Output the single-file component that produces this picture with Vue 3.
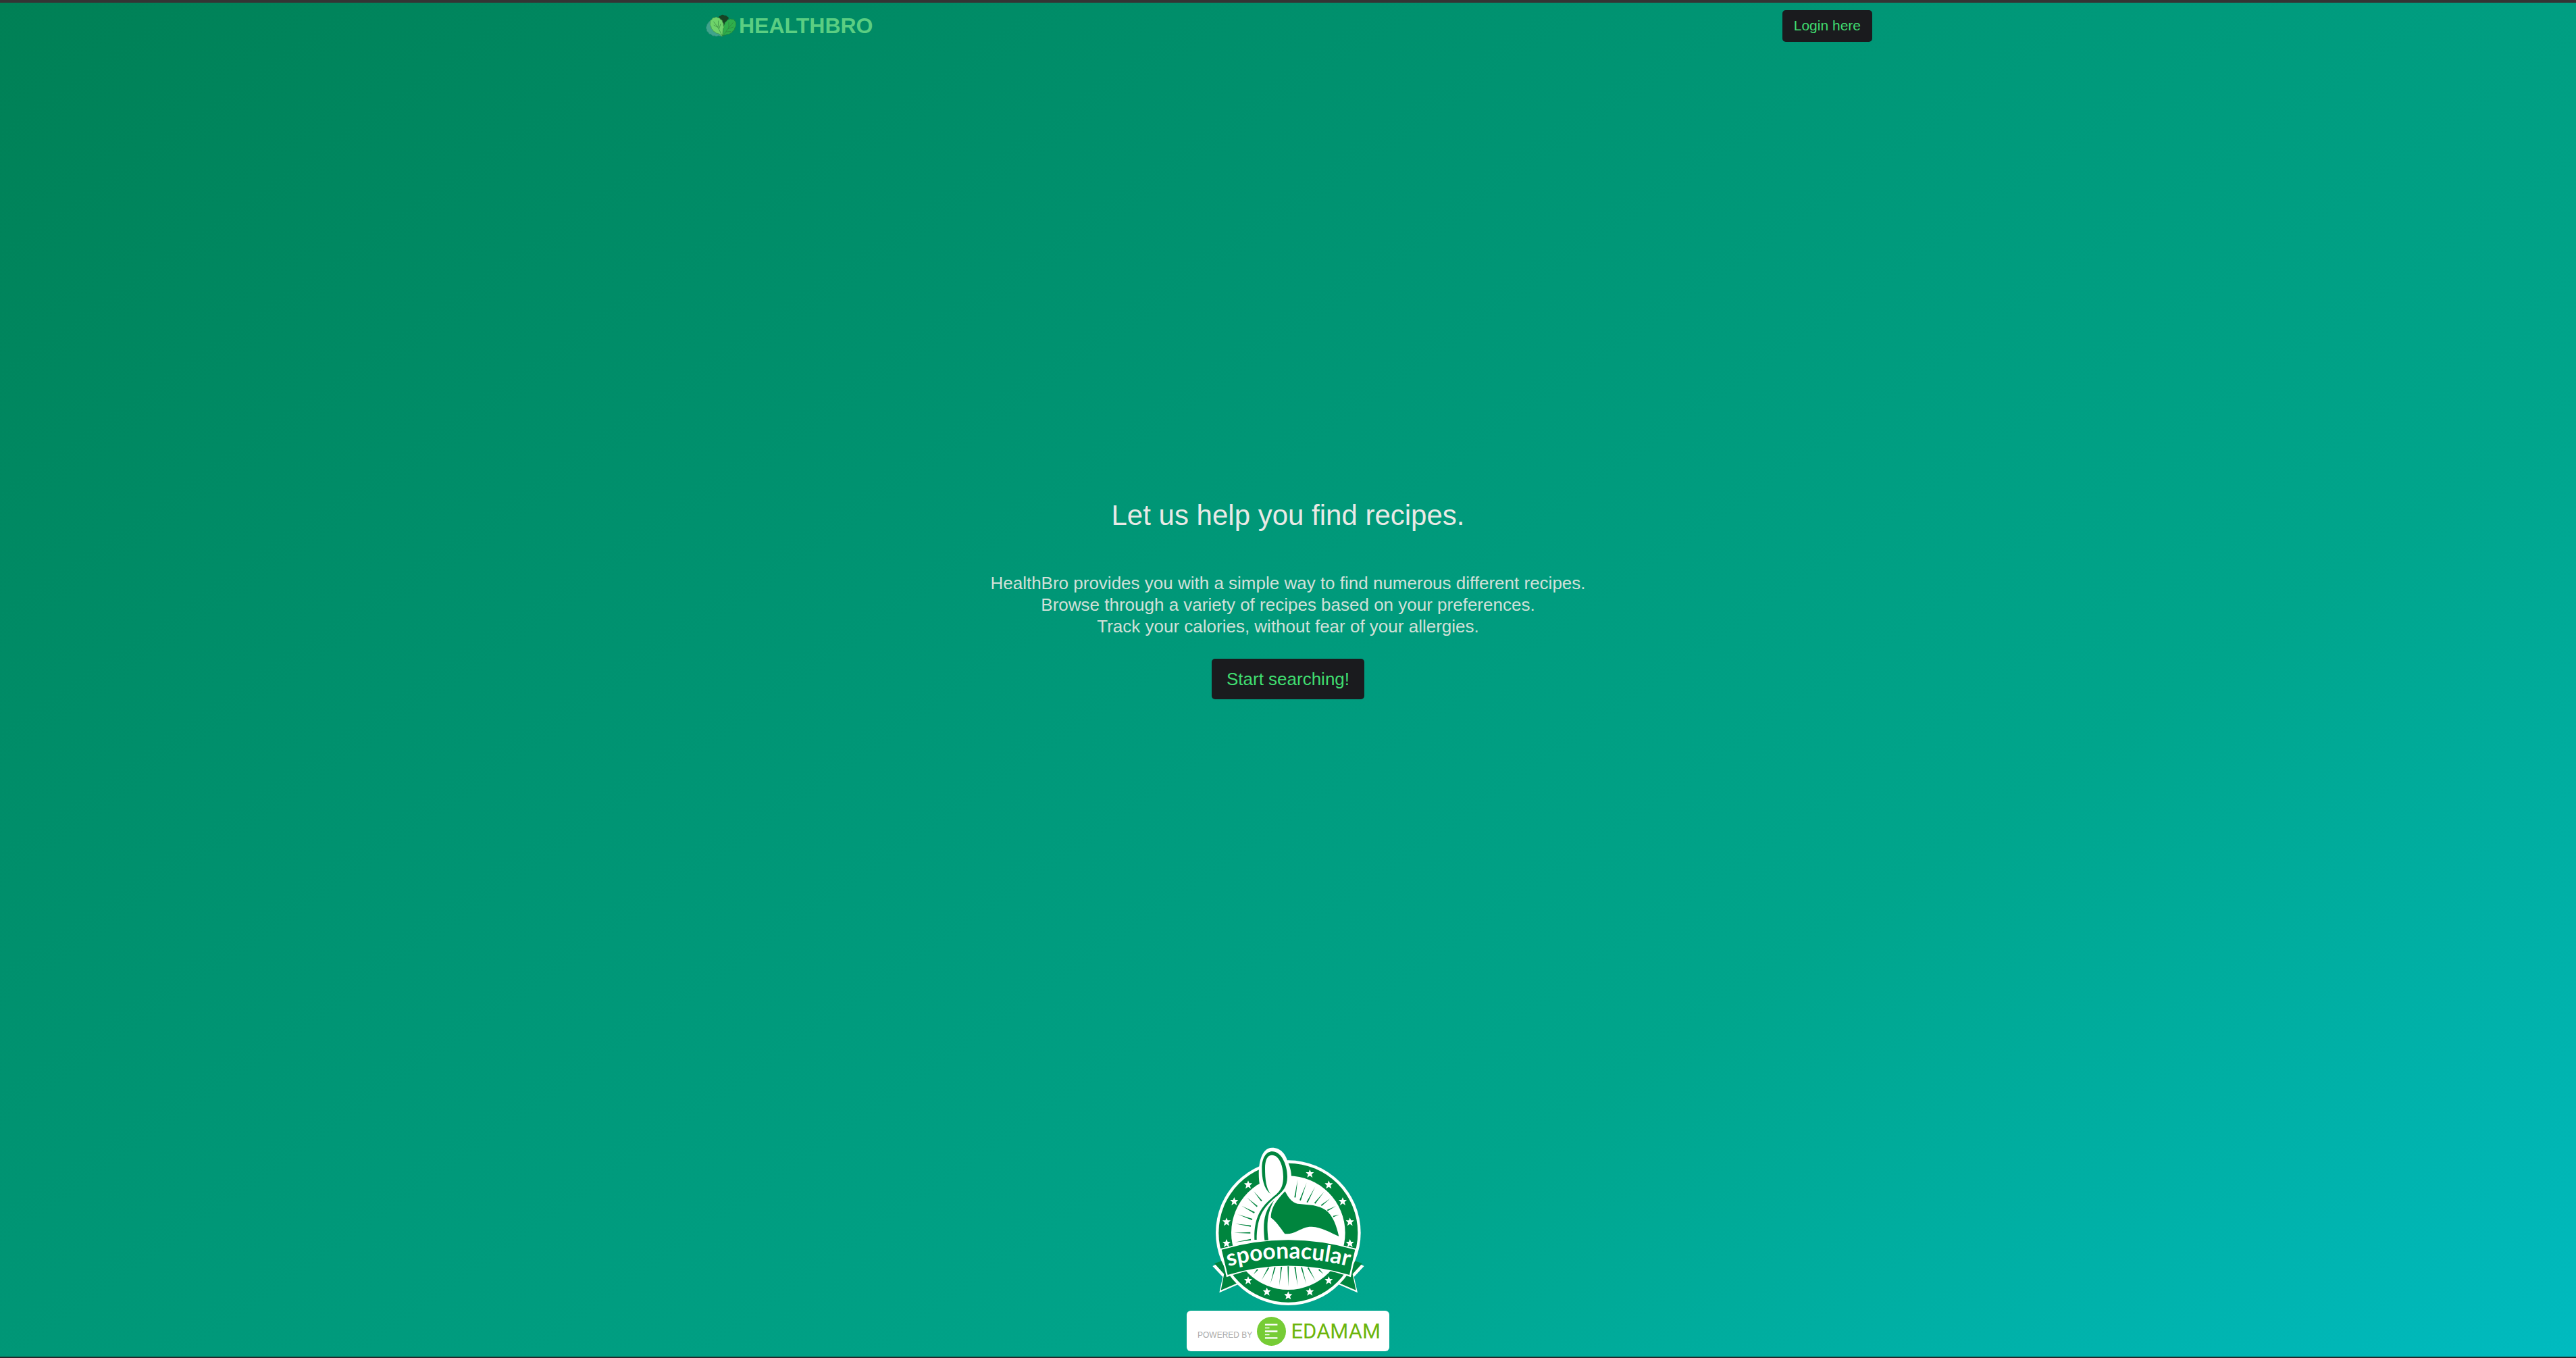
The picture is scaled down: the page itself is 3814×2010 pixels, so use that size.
<script setup>
const intro = [
  'HealthBro provides you with a simple way to find numerous different recipes.',
  'Browse through a variety of recipes based on your preferences.',
  'Track your calories, without fear of your allergies.',
]

const stars = [
  [478, 157], [562, 206], [624, 280], [656, 371], [656, 466],
  [204, 206], [142, 280], [108, 371], [108, 466],
  [204, 631], [287, 681], [382, 698], [478, 681], [562, 631],
]

const rays = [
  [424, 184, 412, 262], [464, 196, 435, 275], [502, 214, 466, 284], [542, 236, 500, 288],
  [568, 267, 529, 298], [594, 300, 556, 320], [608, 338, 582, 347],
  [228, 234, 264, 278], [199, 263, 244, 302], [175, 299, 232, 330], [157, 337, 222, 360],
  [147, 379, 216, 389], [141, 419, 214, 419], [145, 461, 216, 449],
  [228, 603, 246, 582], [264, 628, 295, 574], [303, 645, 323, 572], [342, 655, 352, 570],
  [382, 658, 382, 568], [424, 655, 412, 570], [462, 646, 441, 572], [503, 632, 470, 574], [538, 602, 518, 582],
]
const rayPoints = ([x1, y1, x2, y2]) => {
  const length = Math.hypot(x2 - x1, y2 - y1)
  const nx = (-(y2 - y1) / length) * 3
  const ny = ((x2 - x1) / length) * 3
  return `${x1},${y1} ${x2 + nx},${y2 + ny} ${x2 - nx},${y2 - ny}`
}
</script>

<template>
  <div class="page">
    <header class="header">
      <div class="header-inner">
        <a class="brand" href="#">
          <svg class="brand-icon" viewBox="0 0 138 104" aria-hidden="true">
            <path d="M12 36q-8 8-8 16-6 8 0 15-2 9 7 13 2 9 12 9 6 10 16 6 8 6 16 0l20 3L50 40 28 28q-12 0-16 8z" fill="#3fa38c" stroke="#2b8a74" stroke-width="2" />
            <path d="M56 14q2-8 10-8 8-8 16-1 10-1 13 5 8 2 6 9L84 40l-6 48-8 2-4-48z" fill="#174324" />
            <path d="M134 38q-2-8-6-9-1-9-11-7-9-4-15 2-9 0-10 8-10 3-8 12-8 7-4 15-5 8-3 16l-4 20q14-1 21-6 10 2 15-5 9-1 11-10 9-3 8-12 8-8 6-24z" fill="#2faf4b" stroke="#1d8138" stroke-width="2" />
            <path d="M20 36q-3-9 7-13 2-10 12-8 7-6 14 0 10-1 12 8 10 2 9 12 7 6 4 15 6 8-1 15l-2 22-5 12q-6-12-16-14-9 1-13-7-9-1-10-9-9-4-7-13-8-8-4-20z" fill="#6fd36a" stroke="#3f8f45" stroke-width="2" />
            <path d="M34 32l20 26 18 36M56 28l-1 28M35 48l20 10M66 42l-7 22M122 36l-24 28-22 34M102 34l0 26M124 56l-26 9M112 76l-22 2" fill="none" stroke="#2f7d3e" stroke-width="2" />
          </svg>
          <span>HEALTHBRO</span>
        </a>
        <button class="button" type="button">Login here</button>
      </div>
    </header>

    <main class="hero">
      <h1>Let us help you find recipes.</h1>
      <p><template v-for="(line, i) in intro" :key="i">{{ line }}<br v-if="i < intro.length - 1"></template></p>
      <button class="button large" type="button">Start searching!</button>
    </main>

    <footer class="footer">
      <a class="spoonacular" href="#" aria-label="spoonacular">
        <svg viewBox="45 39 675 705">
          <defs>
            <path id="star" d="M0-19 5-7 18-7 8 3 12 17 0 9-12 17-8 3-18-7-5-7z" />
            <path id="banner-curve" d="M90 575Q382 491 676 575" />
          </defs>
          <path d="M46 567 100 540 140 610 160 648 76 685 91 615zM719 567 665 540 625 610 605 648 690 685 674 615z" fill="#fff" />
          <path d="M54 555 90 543 112 608 138 606 156 643 83 674 97 602zM711 555 675 543 653 608 627 606 609 643 683 674 668 602z" fill="#00853e" />
          <circle cx="382" cy="419" r="322" fill="#fff" />
          <circle cx="382" cy="419" r="309" fill="#00853e" />
          <circle cx="382" cy="419" r="253" fill="#fff" />
          <polygon v-for="(ray, i) in rays" :key="`ray-${i}`" :points="rayPoints(ray)" fill="#00853e" />
          <use v-for="([x, y], i) in stars" :key="`star-${i}`" href="#star" :x="x" :y="y" fill="#fff" />
          <path d="M255 205C243 115 262 42 310 41c40 0 62 32 69 60 12 25 18 50 17 80l-17 60-70 30-54-50z" fill="#fff" />
          <path fill-rule="evenodd" d="M304 247C272 224 265 175 265 133c0-45 18-75 46-75 40 0 67 58 67 112 0 45-22 68-51 90-50 42-85 82-85 190h-10c-3-82 20-132 62-172 39-35 66-46 66-108 0-47-17-96-51-96-22 0-30 27-30 58 0 50 5 91 25 115z" fill="#00853e" />
          <path d="M319 275c-26 50-36 95-25 177h-17c-8-72-5-129 42-177z" fill="#00853e" />
          <path d="M368 235c15 29 33 55 64 56 42 4 82 4 116 27 33 24 48 69 59 117-39-18-78-41-120-43-47-2-66 34-120 32-22-29-35-52-62-72 0-50 30-82 63-117z" fill="#00853e" />
          <path d="M79 490Q382 406 686 490L660 616Q382 516 108 616z" fill="#fff" />
          <path d="M86 494Q382 407 679 494L654 606Q382 525 113 606z" fill="#00853e" />
          <text class="banner-text"><textPath href="#banner-curve" startOffset="50%" text-anchor="middle">spoonacular</textPath></text>
        </svg>
      </a>
      <a class="edamam" href="#">
        <span class="powered">POWERED BY</span>
        <svg class="edamam-icon" viewBox="0 0 130 130" aria-hidden="true">
          <circle cx="65" cy="65" r="65" fill="#76cc35" />
          <path d="M36 35H92M36 65H92M36 95H92" stroke="#fff" stroke-width="7" />
          <path d="M36 50H56M36 80H56" stroke="#fff" stroke-width="5" />
        </svg>
        <span class="edamam-name">EDAMAM</span>
      </a>
    </footer>
  </div>
</template>

<style>
body {
  margin: 0;
}
</style>

<style scoped>
.page {
  box-sizing: border-box;
  min-height: 100vh;
  display: flex;
  flex-direction: column;
  border-top: 4px solid #343434;
  border-bottom: 2px solid #222829;
  background: linear-gradient(145deg, #008055 0%, #00a58c 70%, #00bbc0 100%) padding-box;
  font-family: "Liberation Sans", Arial, sans-serif;
}

.header-inner {
  box-sizing: border-box;
  max-width: 1730px;
  height: 68px;
  margin: 0 auto;
  display: flex;
  align-items: center;
  justify-content: space-between;
}

.brand {
  display: flex;
  align-items: center;
  gap: 3px;
  padding-left: 3px;
  color: #5bce82;
  font-size: 32px;
  font-weight: 700;
  line-height: 40px;
  text-decoration: none;
}

.brand-icon {
  width: 46px;
  height: 35px;
}

.button {
  height: 47px;
  padding: 0 17px;
  border: 0;
  border-radius: 5px;
  background: #1a1b1e;
  color: #40de70;
  font-family: inherit;
  font-size: 21px;
  cursor: pointer;
}

.button.large {
  height: 60px;
  padding: 0 22px;
  font-size: 26px;
}

.hero {
  flex: 1;
  display: flex;
  flex-direction: column;
  align-items: center;
  justify-content: center;
  text-align: center;
}

.hero h1 {
  margin: 0 0 56px;
  color: #e9e9e5;
  font-size: 42px;
  font-weight: 400;
  line-height: 56px;
}

.hero p {
  margin: 0 0 32px;
  color: #d2e0d8;
  font-size: 26px;
  line-height: 32px;
}

.footer {
  display: flex;
  flex-direction: column;
  align-items: center;
  gap: 7px;
  padding-bottom: 8px;
}

.spoonacular {
  display: block;
}

.spoonacular svg {
  display: block;
  width: 225px;
  height: 235px;
}

.banner-text {
  fill: #fff;
  font-family: Lato, sans-serif;
  font-size: 100px;
  font-weight: 700;
}

.edamam {
  box-sizing: border-box;
  width: 300px;
  height: 60px;
  padding: 0 13px 0 16px;
  display: flex;
  align-items: center;
  justify-content: space-between;
  border-radius: 6px;
  background: #fff;
  text-decoration: none;
}

.powered {
  padding-top: 12px;
  color: #a9a9a9;
  font-size: 12px;
}

.edamam-icon {
  width: 43px;
  height: 43px;
}

.edamam-name {
  color: #6db50c;
  font-family: Roboto, sans-serif;
  font-size: 31px;
  font-weight: 400;
}
</style>
